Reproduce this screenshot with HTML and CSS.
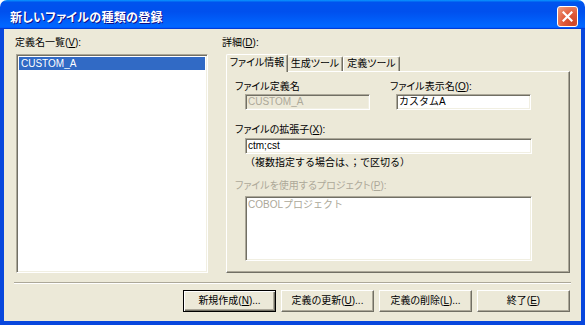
FILE: index.html
```html
<!DOCTYPE html>
<html lang="ja">
<head>
<meta charset="utf-8">
<link rel="stylesheet" href="styles.css">
</head>
<body>
<div class="window">
  <div class="titlebar">
    <span class="title">新しいファイルの種類の登録</span>
    <span class="close">
      <svg width="11" height="11" viewBox="0 0 11 11"><path d="M1.5 1.5 L9.5 9.5 M9.5 1.5 L1.5 9.5" stroke="#fff" stroke-width="2.2" stroke-linecap="square" fill="none"/></svg>
    </span>
  </div>
  <div class="frame">
    <div class="client">
      <div class="main">
        <div class="leftcol">
          <div class="label">定義名一覧(<u>V</u>):</div>
          <div class="listbox sunken">
            <div class="item selected">CUSTOM_A</div>
          </div>
        </div>
        <div class="rightcol">
          <div class="label">詳細(<u>D</u>):</div>
          <div class="tabs">
            <div class="tab active">ファイル情報</div>
            <div class="tab t2">生成ツール</div>
            <div class="tab t3">定義ツール</div>
          </div>
          <div class="panel">
            <div class="row">
              <div class="field f1">
                <div class="flabel">ファイル定義名</div>
                <div class="input sunken disabled w125">CUSTOM_A</div>
              </div>
              <div class="field f2">
                <div class="flabel">ファイル表示名(<u>O</u>):</div>
                <div class="input sunken w135">カスタムA</div>
              </div>
            </div>
            <div class="flabel l2">ファイルの拡張子(<u>X</u>):</div>
            <div class="input sunken wide">ctm;cst</div>
            <div class="note">（複数指定する場合は、；で区切る）</div>
            <div class="flabel l3 grey">ファイルを使用するプロジェクト(<u>P</u>):</div>
            <div class="textarea sunken">COBOLプロジェクト</div>
          </div>
        </div>
      </div>
      <div class="separator"></div>
      <div class="buttons">
        <div class="btn default">新規作成(<u>N</u>)...</div>
        <div class="btn">定義の更新(<u>U</u>)...</div>
        <div class="btn">定義の削除(<u>L</u>)...</div>
        <div class="btn">終了(<u>E</u>)</div>
      </div>
    </div>
  </div>
</div>
</body>
</html>
```
FILE: styles.css
```css
html, body {
  margin: 0;
  padding: 0;
  background: #ffffff;
}
body {
  font-family: "Liberation Sans", "Noto Sans CJK JP", sans-serif;
  font-size: 10px;
  color: #000;
}
.window {
  width: 585px;
  height: 325px;
  display: flex;
  flex-direction: column;
}
.titlebar {
  height: 29px;
  box-sizing: border-box;
  padding-top: 3px;
  display: flex;
  align-items: center;
  justify-content: space-between;
  border-radius: 7px 7px 0 0;
  background: linear-gradient(180deg, #0997ff, #0053ee 8%, #0050ee 40%, #0066ff 88%, #0066ff 93%, #005bff 95%, #003dd7 96%, #003dd7);
}
.title {
  padding-left: 10px;
  color: #fff;
  font-weight: bold;
  font-size: 12px;
  font-feature-settings: "palt";
  text-shadow: 1px 1px #0f1089;
  letter-spacing: 0.3px;
}
.close {
  width: 21px;
  height: 21px;
  box-sizing: border-box;
  margin-right: 7px;
  border: 1px solid #fff;
  border-radius: 3px;
  background: radial-gradient(circle at 80% 85%, #cc4628 0%, #e05a3a 45%, #f0a080 100%);
  display: flex;
  align-items: center;
  justify-content: center;
}
.close svg { display: block; }
.frame {
  flex: 1;
  display: flex;
  border: 4px solid #0847dd;
  border-top: 0;
  box-shadow: inset 1px 0 #0831d9, inset -1px 0 #001ea0, inset 0 -1px #001ea0;
}
.client {
  flex: 1;
  background: #ece9d8;
  padding: 7px 10px 9px 10px;
  display: flex;
  flex-direction: column;
}
.main {
  flex: 1;
  display: flex;
  gap: 14px;
}
.label {
  height: 14px;
  line-height: 14px;
  font-feature-settings: "palt";
}
.leftcol {
  width: 194px;
  display: flex;
  flex-direction: column;
}
.leftcol .label { padding-left: 1px; }
.sunken {
  box-sizing: border-box;
  border: 1px solid;
  border-color: #aca899 #ffffff #ffffff #aca899;
  box-shadow: inset 1px 1px #716f64, inset -1px -1px #f1efe2;
}
.listbox {
  flex: 1;
  margin: 4px 0 0 2px;
  background: #fff;
  padding: 2px 2px 2px 2px;
}
.item {
  height: 13px;
  line-height: 13px;
  padding-left: 2px;
}
.item.selected {
  background: #316ac5;
  color: #fff;
}
.rightcol {
  flex: 1;
  display: flex;
  flex-direction: column;
}
.tabs {
  display: flex;
  align-items: flex-end;
  margin-top: 4px;
  padding-left: 4px;
  height: 17px;
}
.tab {
  box-sizing: border-box;
  height: 15px;
  line-height: 13px;
  text-align: center;
  border: 1px solid;
  border-color: #fff #716f64 transparent #fff;
  border-bottom: 0;
  border-radius: 2px 2px 0 0;
  box-shadow: inset -1px 0 #aca899;
  font-feature-settings: "palt";
}
.tab.active {
  width: 62px;
  height: 18px;
  line-height: 15px;
  margin-bottom: -1px;
  position: relative;
  z-index: 1;
  background: #ece9d8;
}
.tab.t2 { width: 55px; border-left: 0; }
.tab.t3 { width: 57px; border-left: 1px solid #fff; }
.panel {
  flex: 1;
  margin: 0 1px 0 4px;
  box-sizing: border-box;
  border: 1px solid;
  border-color: #fff #716f64 #716f64 #fff;
  box-shadow: inset -1px -1px #aca899;
  padding: 8px 0 0 8px;
  display: flex;
  flex-direction: column;
  align-items: flex-start;
}
.row {
  display: flex;
}
.field {
  display: flex;
  flex-direction: column;
}
.f1 { width: 155px; }
.flabel {
  height: 13px;
  line-height: 13px;
  font-feature-settings: "palt";
  white-space: nowrap;
}
.input {
  height: 16px;
  line-height: 14px;
  padding-left: 2px;
  margin-top: 1px;
  background: #fff;
  white-space: nowrap;
}
.f1 .input { margin-left: 10px; }
.f2 .input { margin-left: 6px; }
.w125 { width: 125px; }
.w135 { width: 135px; }
.disabled {
  background: #ece9d8;
  color: #aca899;
}
.l2 { margin-top: 13px; }
.wide {
  width: 287px;
  margin: 2px 0 0 10px;
}
.note {
  height: 14px;
  line-height: 14px;
  margin: 2px 0 0 10px;
  white-space: nowrap;
}
.l3 { margin-top: 9px; }
.grey { color: #aca899; }
.textarea {
  width: 287px;
  height: 65px;
  margin: 4px 0 0 10px;
  padding: 2px 0 0 2px;
  background: #fff;
  color: #aca899;
  line-height: 12px;
}
.separator {
  margin-top: 9px;
  height: 1px;
  border-top: 1px solid #aca899;
  background: #fff;
}
.buttons {
  margin-top: 6px;
  display: flex;
  justify-content: flex-end;
  gap: 5px;
  padding-right: 1px;
}
.btn {
  box-sizing: border-box;
  width: 93px;
  height: 22px;
  line-height: 20px;
  text-align: center;
  background: #ece9d8;
  border: 1px solid;
  border-color: #fff #716f64 #716f64 #fff;
  box-shadow: inset -1px -1px #aca899;
  font-feature-settings: "palt";
}
.btn.default {
  border-color: #000;
  box-shadow: inset 1px 1px #fff, inset -1px -1px #716f64, inset -2px -2px #aca899;
}
```
